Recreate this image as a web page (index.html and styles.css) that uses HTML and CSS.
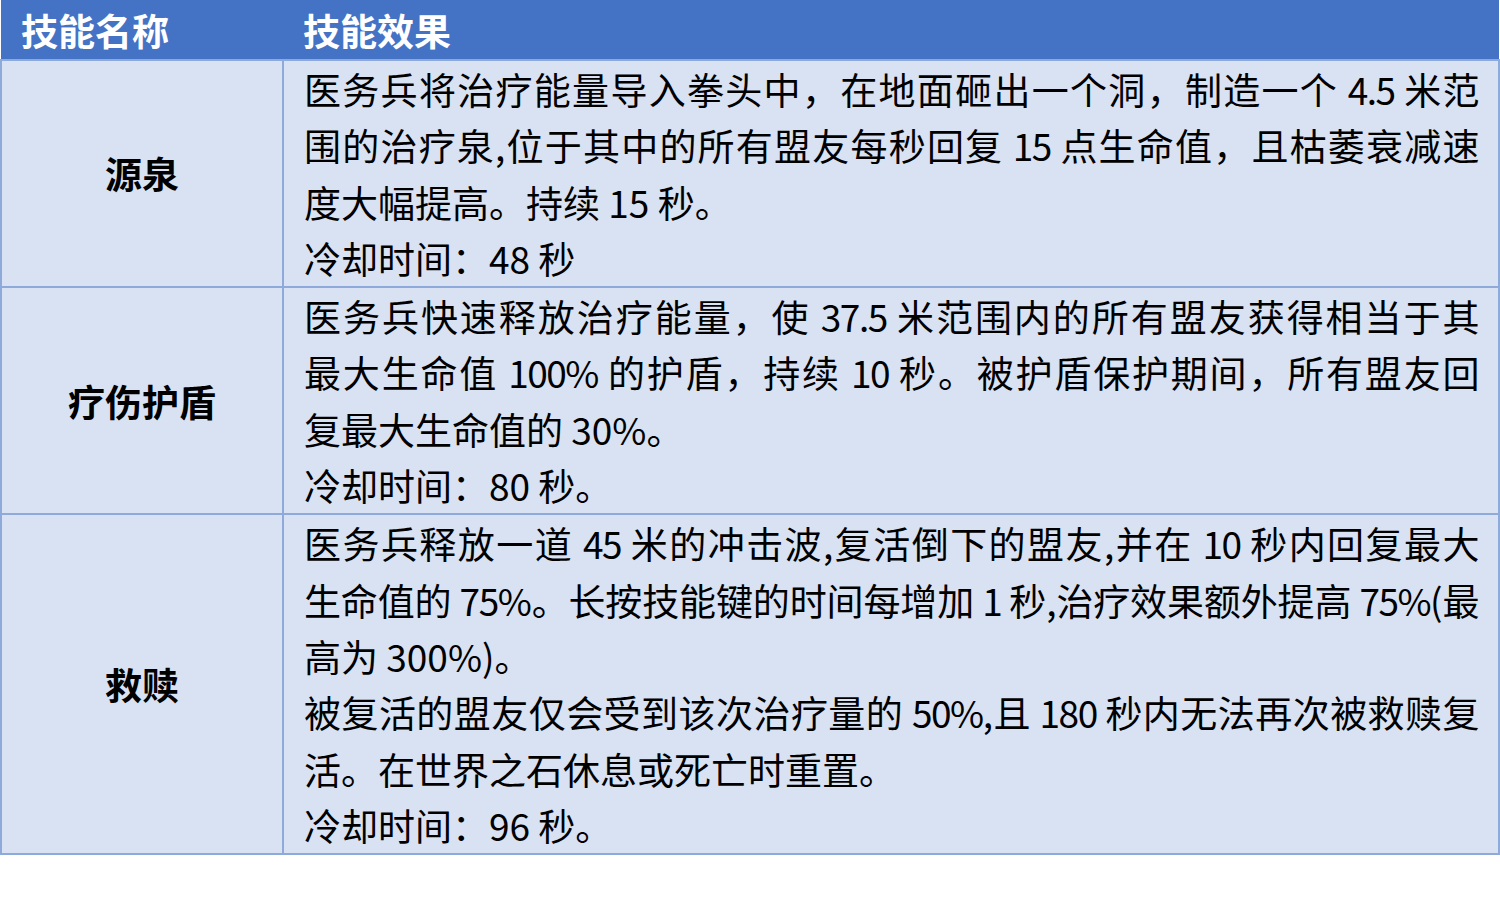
FILE: index.html
```html
<!DOCTYPE html>
<html lang="zh">
<head>
<meta charset="utf-8">
<link rel="stylesheet" href="styles.css">
</head>
<body>
<table class="skills">
  <colgroup><col class="c-name"><col class="c-effect"></colgroup>
  <thead>
    <tr><th class="h-name">技能名称</th><th class="h-effect">技能效果</th></tr>
  </thead>
  <tbody>
    <tr>
      <td class="name">源泉</td>
      <td class="effect">
        <span class="jl">医务兵将治疗能量导入拳头中，在地面砸出一个洞，制造一个 4.5 米范</span>
        <span class="jl">围的治疗泉,位于其中的所有盟友每秒回复 15 点生命值，且枯萎衰减速</span>
        <span class="ln">度大幅提高。持续 15 秒。</span>
        <span class="ln">冷却时间：48 秒</span>
      </td>
    </tr>
    <tr>
      <td class="name">疗伤护盾</td>
      <td class="effect">
        <span class="jl">医务兵快速释放治疗能量，使 37.5 米范围内的所有盟友获得相当于其</span>
        <span class="jl">最大生命值 100% 的护盾，持续 10 秒。被护盾保护期间，所有盟友回</span>
        <span class="ln">复最大生命值的 30%。</span>
        <span class="ln">冷却时间：80 秒。</span>
      </td>
    </tr>
    <tr>
      <td class="name">救赎</td>
      <td class="effect">
        <span class="jl">医务兵释放一道 45 米的冲击波,复活倒下的盟友,并在 10 秒内回复最大</span>
        <span class="jl">生命值的 75%。长按技能键的时间每增加 1 秒,治疗效果额外提高 75%(最</span>
        <span class="ln">高为 300%)。</span>
        <span class="jl">被复活的盟友仅会受到该次治疗量的 50%,且 180 秒内无法再次被救赎复</span>
        <span class="ln">活。在世界之石休息或死亡时重置。</span>
        <span class="ln">冷却时间：96 秒。</span>
      </td>
    </tr>
  </tbody>
</table>
</body>
</html>
```
FILE: styles.css
```css
html, body {
  margin: 0;
  padding: 0;
  background: #ffffff;
}
body {
  font-family: "Noto Sans CJK SC", "Noto Sans", sans-serif;
  color: #000;
}
.skills {
  width: 1500px;
  border-collapse: collapse;
  table-layout: fixed;
}
.c-name { width: 282px; }
.skills th {
  background: #4472c4;
  color: #fff;
  font-weight: bold;
  font-size: 37px;
  height: 59px;
  line-height: 56px;
  text-align: left;
  padding: 0 20px;
  border: none;
}
.skills td {
  background: #d9e2f3;
  border: 2px solid #8eaadb;
  font-size: 37px;
  line-height: 56.3px;
  vertical-align: middle;
  padding: 0;
}
.name {
  text-align: center;
  font-weight: bold;
}
.skills td.effect {
  padding: 0 20px;
}
.jl, .ln {
  display: block;
  white-space: nowrap;
}
.jl {
  letter-spacing: -1.5px;
  text-align: justify;
  text-align-last: justify;
}
.ln {
  text-align: left;
}
```
